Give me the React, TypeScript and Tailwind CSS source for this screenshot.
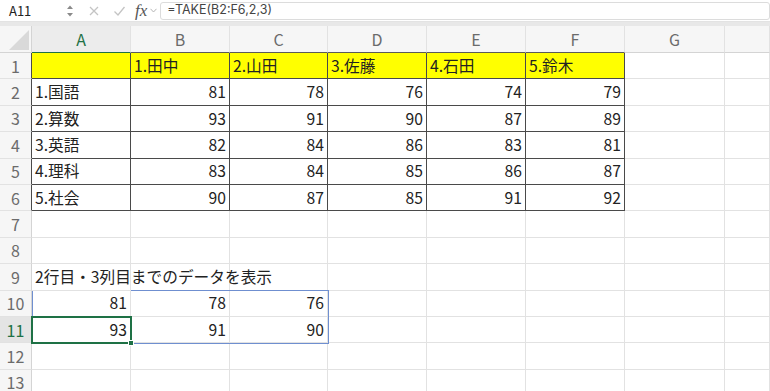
import React from "react";

const COLS = ["A", "B", "C", "D", "E", "F", "G", ""];
const WIDTHS = "grid-cols-[32px_99px_99px_98px_99px_99px_99px_100px_1fr]";

type Cell = string | number | null;

const data: Cell[][] = [
  [null, "1.田中", "2.山田", "3.佐藤", "4.石田", "5.鈴木"],
  ["1.国語", 81, 78, 76, 74, 79],
  ["2.算数", 93, 91, 90, 87, 89],
  ["3.英語", 82, 84, 86, 83, 81],
  ["4.理科", 83, 84, 85, 86, 87],
  ["5.社会", 90, 87, 85, 91, 92],
  [],
  [],
  ["2行目・3列目までのデータを表示"],
  [81, 78, 76],
  [93, 91, 90],
  [],
  [],
];

const font = { fontFamily: '"Noto Sans CJK JP", "Noto Sans", sans-serif' };

function FormulaBar() {
  return (
    <div className="flex h-[22px] items-center border-b border-[#e3e3e3] bg-white">
      <div className="flex w-[76px] items-center justify-between pl-[9px] pr-[2px]">
        <span className="text-[13px] text-[#222]">A11</span>
        <svg width="8" height="14" viewBox="0 0 8 14">
          <path d="M1 5 L4 1.5 L7 5 Z" fill="#8a8a8a" />
          <path d="M1 9 L4 12.5 L7 9 Z" fill="#8a8a8a" />
        </svg>
      </div>
      <svg className="ml-[12px]" width="12" height="12" viewBox="0 0 12 12">
        <path d="M2 2 L10 10 M10 2 L2 10" stroke="#c4c4c4" strokeWidth="1.3" />
      </svg>
      <svg className="ml-[13px]" width="13" height="12" viewBox="0 0 13 12">
        <path d="M1.5 6.5 L5 10 L11.5 2" stroke="#c4c4c4" strokeWidth="1.3" fill="none" />
      </svg>
      <span
        className="ml-[9px] text-[17px] italic leading-none text-[#555]"
        style={{ fontFamily: '"Liberation Serif", serif' }}
      >
        fx
      </span>
      <svg className="ml-[3px]" width="7" height="5" viewBox="0 0 7 5">
        <path d="M0.5 0.8 L3.5 4 L6.5 0.8" stroke="#b5b5b5" strokeWidth="1" fill="none" />
      </svg>
      <div className="ml-[3px] flex h-[18px] flex-1 items-center rounded-[3px] border border-[#dcdcdc] pl-[6px]">
        <span className="text-[12.5px] text-[#444]" style={{ fontFamily: "Inter, sans-serif" }}>
          =TAKE(B2:F6,2,3)
        </span>
      </div>
    </div>
  );
}

function HeaderRow() {
  return (
    <div className={`grid ${WIDTHS} h-[27px] bg-[#f6f6f6]`}>
      <div className="relative border-r border-b border-[#d4d4d4]">
        <svg className="absolute right-[2px] bottom-[2px]" width="20" height="20" viewBox="0 0 20 20">
          <path d="M20 0 L20 20 L0 20 Z" fill="#d9d9d9" />
        </svg>
      </div>
      {COLS.map((c, i) => {
        const inTable = i < 6;
        const border =
          i === 0 ? "border-b-[#1e7145]" : inTable ? "border-b-[#5a5a5a]" : "border-b-[#d4d4d4]";
        return (
          <div
            key={i}
            className={`flex items-center justify-center border-r border-b border-r-[#e2e2e2] ${border} ${
              i === 0 ? "bg-[#ececec] text-[#1e7145]" : "text-[#6b6b6b]"
            } text-[16px]`}
          >
            {c}
          </div>
        );
      })}
    </div>
  );
}

export default function App() {
  return (
    <div className="h-[391px] w-[770px] overflow-hidden bg-white" style={font}>
      <FormulaBar />
      <div className="h-[4px] bg-[#e8e8e8]" />
      <HeaderRow />
      <div className="relative">
        <div className={`grid ${WIDTHS} auto-rows-[26.4px]`}>
          {data.map((row, r) => {
            const tableRow = r < 6;
            const active = r === 10;
            return (
              <React.Fragment key={r}>
                <div
                  className={`flex items-center justify-center border-b border-r border-b-[#e2e2e2] text-[16px] ${
                    tableRow ? "border-r-[#4a4a4a]" : "border-r-[#d4d4d4]"
                  } ${active ? "bg-[#e4e4e4] text-[#1e7145]" : "bg-[#f6f6f6] text-[#6b6b6b]"}`}
                >
                  {r + 1}
                </div>
                {COLS.map((_, c) => {
                  const v = row[c] ?? null;
                  const inTable = tableRow && c < 6;
                  const yellow = r === 0 && c < 6;
                  const isNum = typeof v === "number";
                  const overflow = r === 8 && c === 0;
                  return (
                    <div
                      key={c}
                      className={`flex items-center border-b border-r text-[15.7px] text-[#222] ${
                        inTable ? "border-[#4a4a4a]" : "border-[#e2e2e2]"
                      } ${yellow ? "bg-[#ffff00]" : ""} ${
                        isNum ? "justify-end pr-[3px]" : "pl-[3px]"
                      } ${overflow ? "relative z-10 overflow-visible whitespace-nowrap" : "overflow-hidden whitespace-nowrap"}`}
                    >
                      {v}
                    </div>
                  );
                })}
              </React.Fragment>
            );
          })}
        </div>
        {/* spill range */}
        <div className="pointer-events-none absolute left-[32px] top-[236.6px] h-[54px] w-[297px] border border-[#6f8fd0]" />
        {/* active cell */}
        <div className="pointer-events-none absolute left-[31px] top-[262.6px] h-[28.4px] w-[101px] border-2 border-[#1e7145]">
          <div className="absolute -right-[4px] -bottom-[4px] h-[6px] w-[6px] border border-white bg-[#1e7145]" />
        </div>
      </div>
    </div>
  );
}
